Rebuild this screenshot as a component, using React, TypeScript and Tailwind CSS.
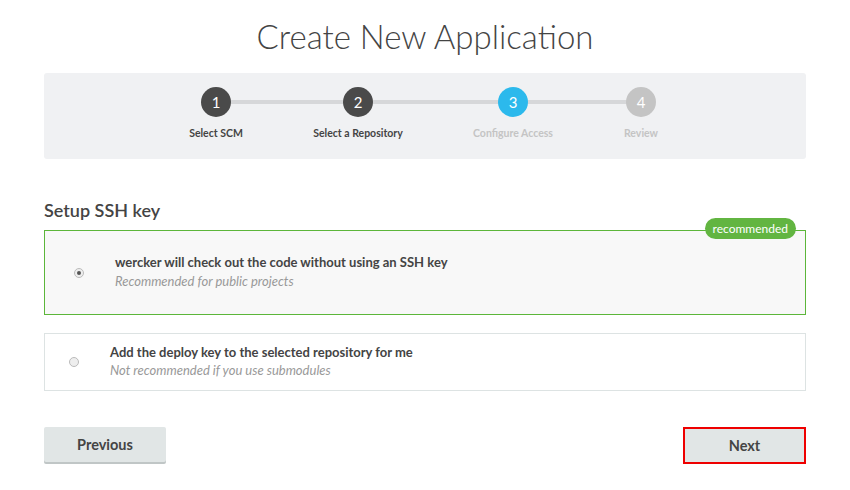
import React from "react";

const steps = [
  { n: "1", label: "Select SCM", state: "done" },
  { n: "2", label: "Select a Repository", state: "done" },
  { n: "3", label: "Configure Access", state: "active" },
  { n: "4", label: "Review", state: "todo" },
];

function Step({ n, label, state }: { n: string; label: string; state: string }) {
  const circle =
    state === "done" ? "bg-[#4a4a4a]" : state === "active" ? "bg-[#2cb9ec]" : "bg-[#c4c4c4]";
  const text = state === "done" ? "text-[#444]" : "text-[#c4c4c4]";
  return (
    <div className="flex w-[120px] flex-col items-center">
      <div className={`z-10 flex h-[30px] w-[30px] items-center justify-center rounded-full text-[15px] text-white ${circle}`}>
        {n}
      </div>
      <div className={`mt-[9px] text-[10.5px] font-bold leading-[14px] ${text}`}>{label}</div>
    </div>
  );
}

export default function App() {
  return (
    <div className="h-[490px] w-[850px] bg-white" style={{ fontFamily: "Lato, 'Open Sans', sans-serif" }}>
      <div className="mx-auto w-[762px] pt-[15px]">
        <h1 className="text-center text-[33px] font-light leading-[42px] text-[#444]">Create New Application</h1>
        <div className="relative mt-[16px] h-[86px] rounded-[3px] bg-[#f0f1f3] pt-[14px]">
          <div className="absolute left-[172px] top-[27px] h-[4px] w-[425px] bg-[#d6d7d9]" />
          <div className="relative flex pl-[112px]">
            <Step {...steps[0]} />
            <div className="w-[22px]" />
            <Step {...steps[1]} />
            <div className="w-[35px]" />
            <Step {...steps[2]} />
            <div className="w-[8px]" />
            <Step {...steps[3]} />
          </div>
        </div>

        <h2 className="mt-[39px] text-[18px] font-semibold leading-[24px] text-[#444]">Setup SSH key</h2>

        <div className="relative mt-[8px] flex h-[85px] items-center border border-[#5cb63a] bg-[#f8f8f8]">
          <div className="absolute right-[9px] top-[-13px] rounded-full bg-[#62b541] px-[8px] text-[12px] leading-[21px] text-white">
            recommended
          </div>
          <div className="ml-[29px] flex h-[10px] w-[10px] items-center justify-center rounded-full border border-[#bbb] bg-[#eee]">
            <div className="h-[4px] w-[4px] rounded-full bg-[#555]" />
          </div>
          <div className="ml-[31px] -mt-[2px]">
            <div className="text-[13px] font-bold leading-[18px] text-[#444]">
              wercker will check out the code without using an SSH key
            </div>
            <div className="mt-[1px] text-[13px] italic leading-[18px] text-[#999]">Recommended for public projects</div>
          </div>
        </div>

        <div className="mt-[18px] flex h-[58px] items-center border border-[#dde3e3] bg-white">
          <div className="ml-[24px] h-[10px] w-[10px] rounded-full border border-[#bbb] bg-[#eee]" />
          <div className="ml-[31px] -mt-[3px]">
            <div className="text-[13px] font-bold leading-[18px] text-[#444]">
              Add the deploy key to the selected repository for me
            </div>
            <div className="text-[13px] italic leading-[18px] text-[#999]">Not recommended if you use submodules</div>
          </div>
        </div>

        <div className="mt-[36px] flex justify-between">
          <button className="h-[35px] w-[122px] rounded-[2px] bg-[#e1e6e6] text-[14.5px] font-bold text-[#444] shadow-[0_2px_0_#c0c6c6]">
            Previous
          </button>
          <button className="h-[37px] w-[123px] border-2 border-[#ee0000] bg-[#e1e6e6] text-[14.5px] font-bold text-[#444]">
            Next
          </button>
        </div>
      </div>
    </div>
  );
}
